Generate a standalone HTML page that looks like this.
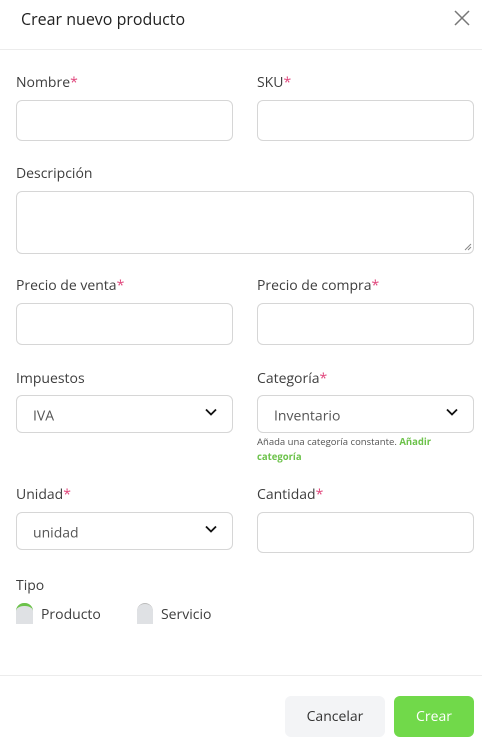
<!DOCTYPE html>
<html><head><meta charset="utf-8"><style>
body{margin:0;width:482px;height:747px;background:#fff;font-family:"Open Sans","Liberation Sans",sans-serif;color:#3a3a3a;position:relative;overflow:hidden}
.a{position:absolute}
.lbl{position:absolute;font-size:14px;color:#3d3d3d}
.lbl i{font-style:normal;color:#e0457b}
.in{position:absolute;border:1px solid #d6d6d6;border-radius:6px;box-sizing:border-box;background:#fff}
.sel{font-size:14px;color:#555}
.sel span{position:absolute;left:16px;top:50%;transform:translateY(-40%)}
.sel svg{position:absolute;right:15px;top:50%;margin-top:-6px}
</style></head><body>
<div class="a" style="left:21px;top:8px;font-size:16px;color:#222">Crear nuevo producto</div>
<svg class="a" style="left:454px;top:10px" width="16" height="16" viewBox="0 0 16 16"><path d="M1 1L15 15M15 1L1 15" stroke="#777" stroke-width="1.5"/></svg>
<div class="a" style="left:0;top:49px;width:482px;height:1px;background:#ececec"></div>

<div class="lbl" style="left:16px;top:73px">Nombre<i>*</i></div>
<div class="lbl" style="left:257px;top:73px">SKU<i>*</i></div>
<div class="in" style="left:16px;top:100px;width:217px;height:41px"></div>
<div class="in" style="left:257px;top:100px;width:217px;height:41px"></div>

<div class="lbl" style="left:16px;top:164px">Descripción</div>
<div class="in" style="left:16px;top:191px;width:458px;height:63px"></div>
<svg class="a" style="left:464px;top:243px" width="8" height="8"><path d="M7 1L1 7M7 4L4 7" stroke="#888"/></svg>

<div class="lbl" style="left:16px;top:276px">Precio de venta<i>*</i></div>
<div class="lbl" style="left:257px;top:276px">Precio de compra<i>*</i></div>
<div class="in" style="left:16px;top:303px;width:217px;height:42px"></div>
<div class="in" style="left:257px;top:303px;width:217px;height:42px"></div>

<div class="lbl" style="left:16px;top:369px">Impuestos</div>
<div class="lbl" style="left:257px;top:369px">Categoría<i>*</i></div>
<div class="in sel" style="left:16px;top:395px;width:217px;height:38px"><span>IVA</span><svg width="12" height="8"><path d="M1 1.5L6 6.5L11 1.5" stroke="#111" stroke-width="1.8" fill="none"/></svg></div>
<div class="in sel" style="left:257px;top:395px;width:217px;height:38px"><span>Inventario</span><svg width="12" height="8"><path d="M1 1.5L6 6.5L11 1.5" stroke="#111" stroke-width="1.8" fill="none"/></svg></div>
<div class="a" style="left:257px;top:434px;font-size:9.5px;line-height:15px;color:#555;width:215px">Añada una categoría constante. <b style="color:#6cc24a">Añadir categoría</b></div>

<div class="lbl" style="left:16px;top:485px">Unidad<i>*</i></div>
<div class="lbl" style="left:257px;top:485px">Cantidad<i>*</i></div>
<div class="in sel" style="left:16px;top:512px;width:217px;height:38px"><span>unidad</span><svg width="12" height="8"><path d="M1 1.5L6 6.5L11 1.5" stroke="#111" stroke-width="1.8" fill="none"/></svg></div>
<div class="in" style="left:257px;top:512px;width:217px;height:41px"></div>

<div class="lbl" style="left:16px;top:576px">Tipo</div>
<div class="a" style="left:16px;top:603px;width:17px;height:21px;background:#dfe1e4;border-radius:8px 8px 0 0;border-top:3px solid #6cc24a;box-sizing:border-box"></div>
<div class="lbl" style="left:41px;top:605px">Producto</div>
<div class="a" style="left:137px;top:603px;width:16px;height:21px;background:#dfe1e4;border-radius:8px 8px 0 0;border-top:1px solid #bbb;box-sizing:border-box"></div>
<div class="lbl" style="left:161px;top:605px">Servicio</div>

<div class="a" style="left:0;top:675px;width:482px;height:1px;background:#ececec"></div>
<div class="a" style="left:285px;top:696px;width:100px;height:41px;background:#f3f4f6;border-radius:6px;font-size:14px;color:#333;text-align:center;line-height:41px">Cancelar</div>
<div class="a" style="left:394px;top:696px;width:80px;height:41px;background:#71d94a;border-radius:6px;font-size:14px;color:#fff;text-align:center;line-height:41px">Crear</div>
</body></html>
